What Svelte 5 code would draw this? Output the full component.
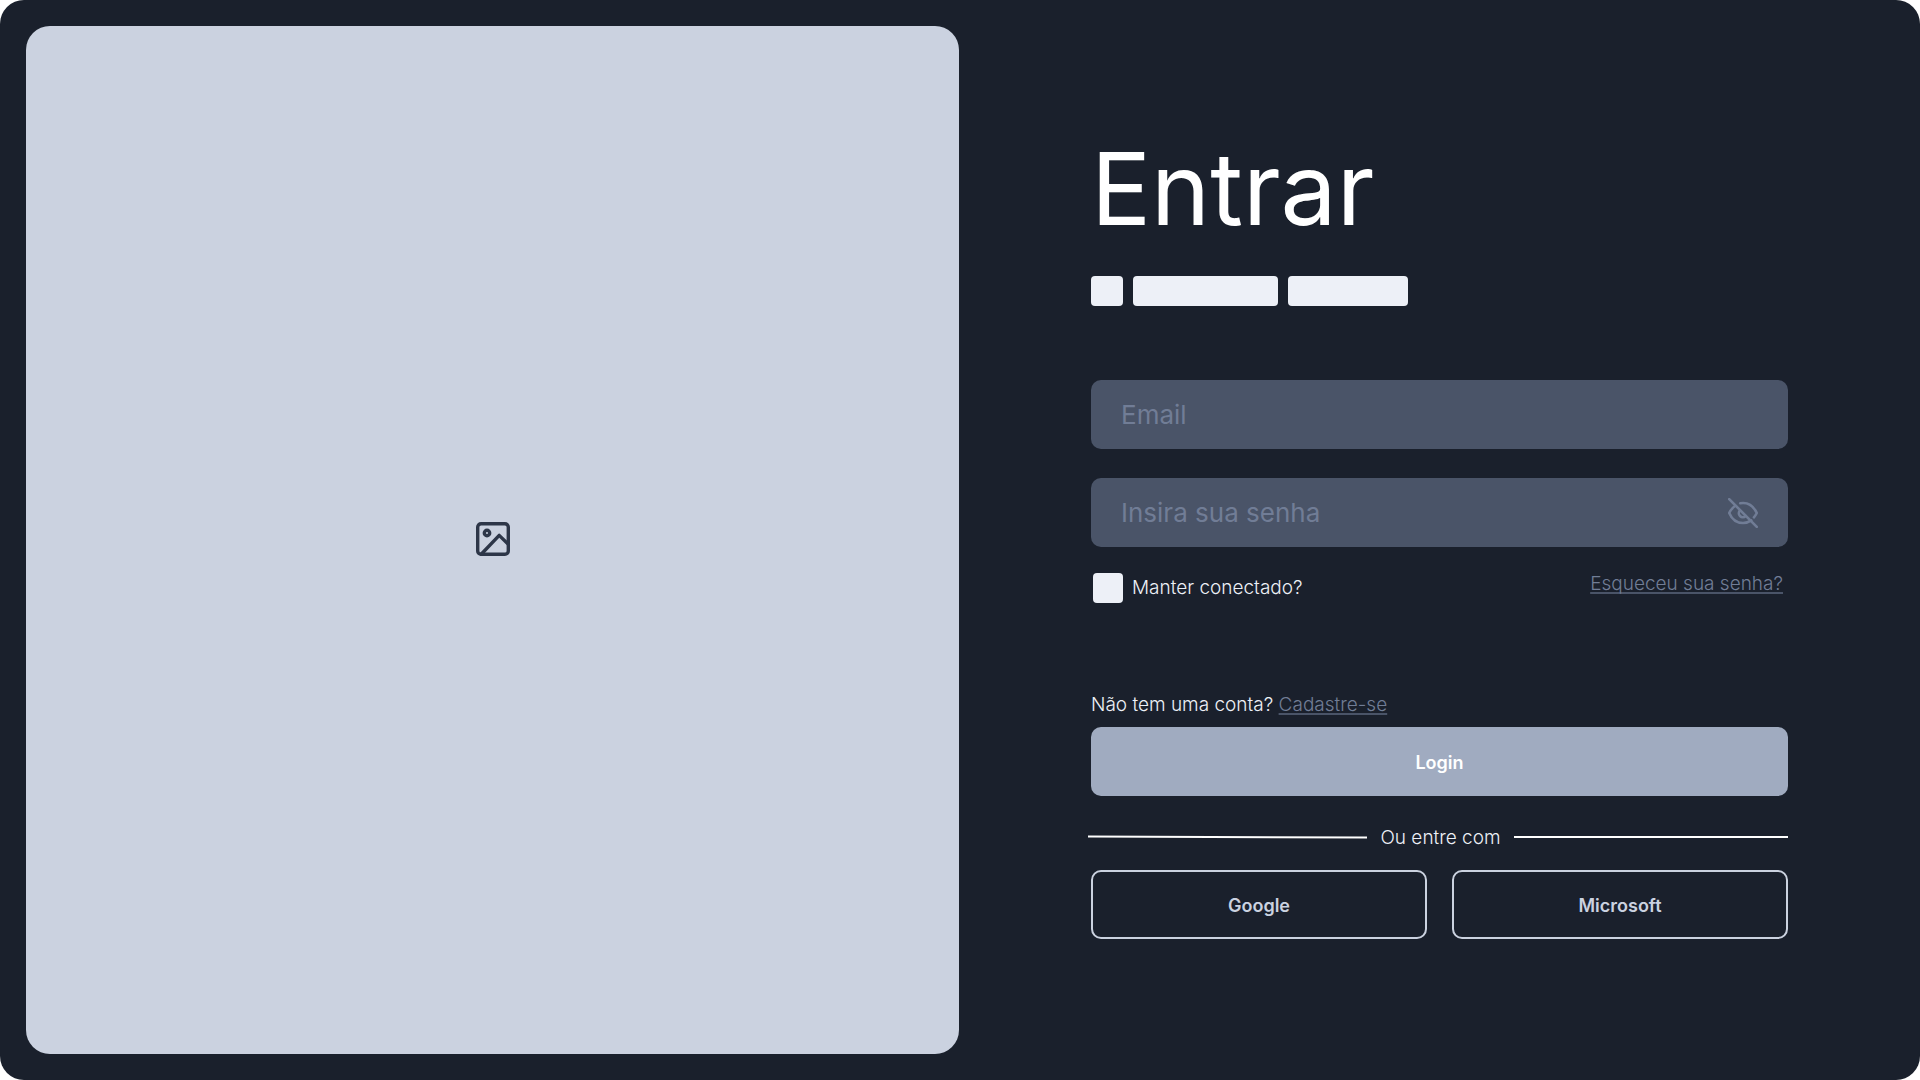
<script>
  let email = $state('');
  let password = $state('');
  let visible = $state(false);
  let keep = $state(false);
</script>

<main class="page">
  <section class="cover" aria-label="Imagem">
    <svg class="cover-icon" viewBox="0 0 34 34" aria-hidden="true">
      <rect x="1.7" y="1.7" width="30.6" height="30.6" rx="3.4" />
      <circle cx="11" cy="11" r="2.7" />
      <path d="M32.3 22.2 L23.2 13.4 L5.2 32.2" />
    </svg>
  </section>

  <section class="panel">
    <h1>Entrar</h1>
    <div class="bars" aria-hidden="true">
      <span class="bar small"></span>
      <span class="bar large"></span>
      <span class="bar medium"></span>
    </div>

    <form onsubmit={(e) => e.preventDefault()}>
      <input class="field" type="email" placeholder="Email" aria-label="Email" bind:value={email} />
      <div class="password">
        <input
          class="field"
          type={visible ? 'text' : 'password'}
          placeholder="Insira sua senha"
          aria-label="Senha"
          bind:value={password}
        />
        <button class="toggle" type="button" aria-label="Mostrar senha" onclick={() => (visible = !visible)}>
          <svg viewBox="0 0 30 30" aria-hidden="true">
            <path d="M1.2 1.2 L28.8 28.8" />
            <path d="M7 8 C4.5 9.8 2.5 12.3 1.2 15 C4 21.5 9 25 15 25 C18.3 25 21 24 23.3 22.4" />
            <path d="M12.2 5.2 C19.5 4 25.5 8 28.8 15 C28 16.6 27 18 25.9 19.3" />
            <path d="M12 12.4 A3.9 3.9 0 1 0 17.6 18" />
          </svg>
        </button>
      </div>

      <div class="options">
        <label class="keep">
          <input type="checkbox" bind:checked={keep} />
          Manter conectado?
        </label>
        <a class="forgot" href="#recuperar">Esqueceu sua senha?</a>
      </div>

      <p class="signup">Não tem uma conta? <a href="#cadastro">Cadastre-se</a></p>
      <button class="login" type="submit">Login</button>

      <div class="divider">
        <svg class="line slanted" viewBox="0 0 280 4" preserveAspectRatio="none" aria-hidden="true">
          <path d="M0 1.5 L280 2.5" />
        </svg>
        <span>Ou entre com</span>
        <svg class="line" viewBox="0 0 280 4" preserveAspectRatio="none" aria-hidden="true">
          <path d="M0 2 L280 2" />
        </svg>
      </div>

      <div class="providers">
        <button type="button">Google</button>
        <button type="button">Microsoft</button>
      </div>
    </form>
  </section>
</main>

<style>
  :global(body) {
    margin: 0;
    background: #fff;
  }

  .page,
  .page * {
    box-sizing: border-box;
  }

  .page {
    display: grid;
    grid-template-columns: 959fr 961fr;
    min-height: 100vh;
    border-radius: 24px;
    background: #1a202c;
    color: #edf0f7;
    font-family: Inter, 'Liberation Sans', sans-serif;
    font-size: 19px;
    line-height: 24px;
  }

  .cover {
    display: flex;
    align-items: center;
    justify-content: center;
    margin: 26px 0 26px 26px;
    padding-bottom: 2px;
    border-radius: 24px;
    background: #cbd2e0;
  }

  .cover-icon {
    width: 34px;
    height: 34px;
    fill: none;
    stroke: #2d3648;
    stroke-width: 3.4;
    stroke-linejoin: round;
    stroke-linecap: round;
  }

  .panel {
    padding: 129px 132px 0;
  }

  h1 {
    margin: 0;
    color: #fff;
    font-size: 100px;
    font-weight: 400;
    line-height: 120px;
  }

  .bars {
    display: flex;
    gap: 10px;
    margin-top: 27px;
  }

  .bar {
    height: 30px;
    border-radius: 4px;
    background: #edf0f7;
  }

  .small {
    width: 32px;
  }

  .large {
    width: 145px;
  }

  .medium {
    width: 120px;
  }

  form {
    margin-top: 74px;
  }

  .field {
    display: block;
    width: 100%;
    height: 69px;
    padding: 0 30px;
    border: 0;
    border-radius: 10px;
    background: #4a5468;
    color: #edf0f7;
    font-family: inherit;
    font-size: 26px;
    font-weight: 400;
  }

  .field::placeholder {
    color: #717d96;
    opacity: 1;
  }

  .password {
    position: relative;
    margin-top: 29px;
  }

  .password .field {
    padding-right: 80px;
  }

  .toggle {
    position: absolute;
    top: 20px;
    right: 30px;
    width: 30px;
    height: 30px;
    padding: 0;
    border: 0;
    background: none;
  }

  .toggle svg {
    display: block;
    width: 30px;
    height: 30px;
    fill: none;
    stroke: #717d96;
    stroke-width: 2.6;
    stroke-linecap: round;
    stroke-linejoin: round;
  }

  .options {
    display: flex;
    justify-content: space-between;
    align-items: flex-start;
    margin-top: 26px;
    padding: 0 5px 0 2px;
  }

  .keep {
    display: flex;
    align-items: center;
    gap: 9px;
    font-weight: 300;
  }

  .keep input {
    appearance: none;
    width: 30px;
    height: 30px;
    margin: 0;
    border-radius: 4px;
    background: #edf0f7;
  }

  .keep input:checked {
    background: #a0abc0;
  }

  a {
    color: #717d96;
    text-decoration: underline;
    text-decoration-color: #4a5468;
    text-decoration-thickness: 2px;
    text-underline-offset: 2px;
    text-decoration-skip-ink: none;
  }

  .forgot {
    margin-top: -1px;
    font-weight: 300;
  }

  .signup {
    margin: 90px 0 0;
    font-weight: 300;
  }

  .login,
  .providers button {
    height: 69px;
    padding: 2px 0 0;
    border-radius: 10px;
    font-family: inherit;
    font-size: 18px;
    font-weight: 600;
  }

  .login {
    display: block;
    width: 100%;
    margin-top: 10px;
    border: 0;
    background: #a0abc0;
    color: #fff;
  }

  .divider {
    display: flex;
    align-items: center;
    gap: 13px;
    margin: 30px 0 20px;
    font-weight: 300;
  }

  .line {
    flex: 275 1 0;
    min-width: 0;
    height: 4px;
    margin-bottom: 2px;
    fill: none;
    stroke: #fff;
    stroke-width: 2;
  }

  .slanted {
    flex-grow: 280;
    margin-left: -3px;
  }

  .providers {
    display: grid;
    grid-template-columns: 1fr 1fr;
    gap: 25px;
  }

  .providers button {
    border: 2px solid #cbd2e0;
    background: none;
    color: #cbd2e0;
  }
</style>
